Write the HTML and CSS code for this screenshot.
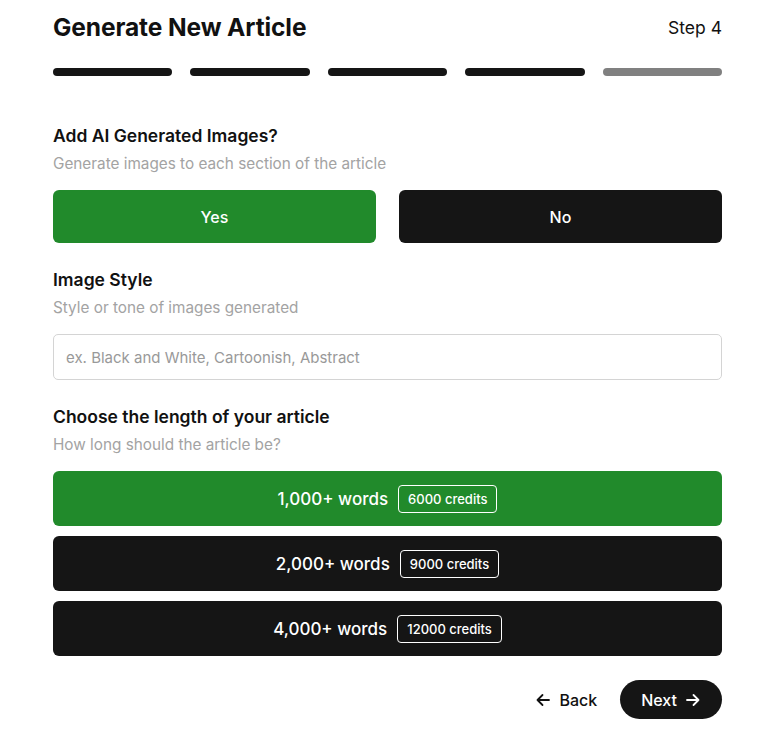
FILE: index.html
```html
<!DOCTYPE html>
<html>
  <head>
    <meta charset="UTF-8">
    <meta name="viewport" content="width=device-width, initial-scale=1" />
    <title>Generate New Article</title>
    <link rel="stylesheet" href="styles.css">
  </head>
  <body>
    <div class="wizard">
      <div class="header">
        <h1 class="title">Generate New Article</h1>
        <span class="step">Step 4</span>
      </div>

      <div class="progress">
        <div class="bar done"></div>
        <div class="bar done"></div>
        <div class="bar done"></div>
        <div class="bar done"></div>
        <div class="bar"></div>
      </div>

      <div class="section">
        <h2 class="label">Add AI Generated Images?</h2>
        <p class="hint">Generate images to each section of the article</p>
        <div class="choice">
          <button class="btn green">Yes</button>
          <button class="btn dark">No</button>
        </div>
      </div>

      <div class="section">
        <h2 class="label">Image Style</h2>
        <p class="hint">Style or tone of images generated</p>
        <input class="field" type="text" placeholder="ex. Black and White, Cartoonish, Abstract">
      </div>

      <div class="section">
        <h2 class="label">Choose the length of your article</h2>
        <p class="hint">How long should the article be?</p>
        <div class="lengths">
          <button class="length green">1,000+ words <span class="credits">6000 credits</span></button>
          <button class="length dark">2,000+ words <span class="credits">9000 credits</span></button>
          <button class="length dark">4,000+ words <span class="credits">12000 credits</span></button>
        </div>
      </div>

      <div class="nav">
        <button class="back">
          <svg width="16" height="16" viewBox="0 0 16 16" fill="none" stroke="currentColor" stroke-width="1.8" stroke-linecap="round" stroke-linejoin="round"><path d="M14 8H2.5M7.5 3L2.5 8l5 5"/></svg>
          Back
        </button>
        <button class="next">
          Next
          <svg width="16" height="16" viewBox="0 0 16 16" fill="none" stroke="currentColor" stroke-width="1.8" stroke-linecap="round" stroke-linejoin="round"><path d="M2 8h11.5M8.5 3l5 5-5 5"/></svg>
        </button>
      </div>
    </div>
  </body>
</html>
```

FILE: styles.css
```css
body {
  margin: 0;
  background: #fff;
  font-family: "Inter", "Liberation Sans", sans-serif;
  color: #111;
}

.wizard {
  width: 669px;
  margin: 0 0 0 53px;
  padding: 12px 0 0 0;
}

.header {
  display: flex;
  justify-content: space-between;
  align-items: center;
  height: 30px;
}
.title {
  margin: 0;
  font-size: 24.5px;
  font-weight: 700;
  letter-spacing: -0.1px;
}
.step {
  font-size: 17.5px;
}

.progress {
  display: flex;
  gap: 18px;
  margin-top: 26px;
}
.bar {
  flex: 1;
  height: 8px;
  border-radius: 4px;
  background: #808080;
}
.bar.done {
  background: #151515;
}

.section {
  margin-top: 48px;
}
.section + .section {
  margin-top: 25px;
}
.label {
  margin: 0;
  font-size: 17.5px;
  font-weight: 600;
  line-height: 24px;
}
.hint {
  margin: 6px 0 0 0;
  font-size: 15.3px;
  line-height: 20px;
  color: #a3a3a3;
}

.choice {
  display: flex;
  gap: 23px;
  margin-top: 16px;
}
.btn {
  flex: 1;
  height: 53px;
  border: none;
  border-radius: 6px;
  color: #fff;
  font-family: inherit;
  font-size: 16px;
  font-weight: 500;
}
.green { background: #218a2b; }
.dark { background: #151515; }

.field {
  display: block;
  box-sizing: border-box;
  width: 100%;
  height: 46px;
  margin-top: 16px;
  padding: 0 12px;
  border: 1px solid #d4d4d4;
  border-radius: 5px;
  font-family: inherit;
  font-size: 15px;
}
.field::placeholder {
  color: #999;
}

.lengths {
  display: flex;
  flex-direction: column;
  gap: 10px;
  margin-top: 16px;
}
.length {
  display: flex;
  align-items: center;
  justify-content: center;
  gap: 10px;
  height: 55px;
  border: none;
  border-radius: 6px;
  color: #fff;
  font-family: inherit;
  font-size: 17px;
  font-weight: 500;
}
.credits {
  padding: 5px 9px;
  border: 1px solid #fff;
  border-radius: 4px;
  font-size: 13px;
  font-weight: 500;
}

.nav {
  display: flex;
  justify-content: flex-end;
  align-items: center;
  gap: 23px;
  margin-top: 24px;
}
.back, .next {
  display: flex;
  align-items: center;
  gap: 8px;
  border: none;
  font-family: inherit;
  font-size: 16px;
  font-weight: 500;
}
.back {
  background: none;
  color: #111;
  padding: 0;
}
.next {
  height: 39px;
  padding: 0 21px;
  border-radius: 20px;
  background: #151515;
  color: #fff;
}
```
